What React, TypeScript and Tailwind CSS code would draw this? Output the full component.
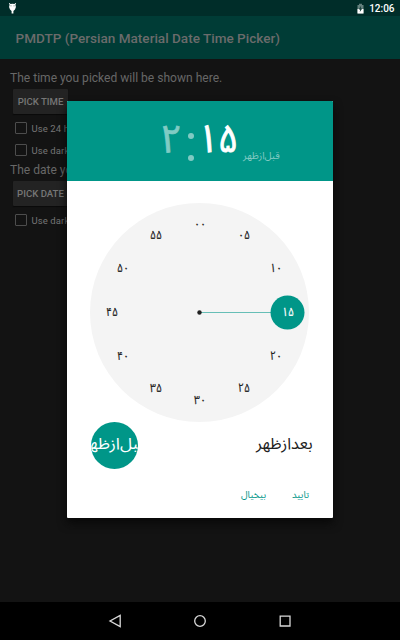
import React from 'react';

const minutes = ['۰۰', '۰۵', '۱۰', '۱۵', '۲۰', '۲۵', '۳۰', '۳۵', '۴۰', '۴۵', '۵۰', '۵۵'];

function CheckRow({ label }: { label: string }) {
  return (
    <div className="flex h-[22px] items-center gap-[4.5px] pl-[15px] text-[9.5px] tracking-[0.1px] text-[#767676]">
      <span className="size-3 rounded-[1px] border-[1.5px] border-[#4d4d4d]" />
      <span className="pt-[2px]">{label}</span>
    </div>
  );
}

function PickButton({ label }: { label: string }) {
  return (
    <button className="ml-[13px] flex h-[25px] w-[55px] items-center justify-center rounded-[1px] bg-[#232323] pt-[1px] text-[9.6px] font-medium whitespace-nowrap text-[#767676] shadow-[0_1px_1px_#0a0a0a]">
      {label}
    </button>
  );
}

function ClockFace() {
  return (
    <div className="relative ml-[23px] mt-[22px] size-[219px] rounded-full bg-[#f4f4f4]">
      <svg className="absolute inset-0" width="219" height="219" viewBox="0 0 219 219">
        <path d="M109.5 109.5H181" stroke="#66beb6" strokeWidth="1.2" />
        <circle cx="109.5" cy="109.5" r="2.2" fill="#212121" />
        <circle cx="197.5" cy="109.5" r="17" fill="#009688" />
      </svg>
      {minutes.map((value, i) => {
        const angle = (i * Math.PI) / 6;
        return (
          <span
            key={value}
            className={`absolute flex h-4 w-6 -translate-x-1/2 -translate-y-1/2 scale-x-[0.87] items-center justify-center font-['Noto_Sans_Arabic','DejaVu_Sans'] text-[12px] leading-4 [-webkit-text-stroke:0.2px] ${i === 3 ? 'text-white' : 'text-[#212121]'}`}
            style={{ left: 109.5 + 88 * Math.sin(angle), top: 109.5 - 88 * Math.cos(angle) }}
          >
            {value}
          </span>
        );
      })}
    </div>
  );
}

export default function App() {
  return (
    <div className="relative flex h-[640px] w-[400px] flex-col overflow-hidden bg-[#131313] font-['Roboto',sans-serif]">
      <div className="flex h-4 shrink-0 items-center bg-[#002d29] pr-[5.5px] pl-[8px] text-white">
        <svg width="9" height="12" viewBox="0 0 9 12" fill="white">
          <path d="M.9 1.2 1.6 1 2.5 2Q4.5 1.3 6.5 2L7.4 1l.7.2-.7 1.6Q8.8 5.6 7 7.6L5.4 8.9V11.5H3.6V8.9L2 7.6Q.2 5.6 1.6 2.8z" />
          <path d="M2.4 3.4h1.1v.9H2.4zM5.5 3.4h1.1v.9H5.5z" fill="#4d6c69" />
        </svg>
        <svg className="ml-auto mr-[5px]" width="7" height="11" viewBox="0 0 7 11">
          <path d="M2 .7h3V2h1.5v8.5h-6V2H2z" fill="#64817e" />
          <path d="M.5 6h6v4.5h-6z" fill="white" />
          <path d="M4.1 2.8 1.7 6.4h1.4L2.8 9l2.5-3.5H3.8z" fill="#163d39" />
        </svg>
        <span className="pt-[2px] text-[10px] font-medium leading-none">12:06</span>
      </div>
      <header className="flex h-[43px] shrink-0 items-center bg-[#003c36] pl-[15.5px] text-[13.55px] font-medium text-[#6b6b6b]">
        <h1 className="mt-[1px] whitespace-nowrap">PMDTP (Persian Material Date Time Picker)</h1>
      </header>
      <main className="h-[543px]">
        <p className="h-[30px] pl-[10px] pt-[10px] text-[12.05px] leading-[18px] text-[#676767]">The time you picked will be shown here.</p>
        <PickButton label="PICK TIME" />
        <div className="pt-[3px]">
          <CheckRow label="Use 24 hours mode" />
          <CheckRow label="Use dark theme" />
        </div>
        <p className="h-5 pl-[10px] text-[12.05px] leading-[18px] text-[#676767]">The date you picked will be shown here.</p>
        <PickButton label="PICK DATE" />
        <div className="pt-[3px]"><CheckRow label="Use dark theme" /></div>
      </main>
      <nav className="flex h-[38px] shrink-0 items-center justify-center gap-[71px] bg-black">
        <svg width="14" height="14" viewBox="0 0 14 14" fill="none" stroke="#d9d9d9" strokeWidth="1.3"><path d="M12.2 1.4v11.2L2 7z" /></svg>
        <svg width="14" height="14" viewBox="0 0 14 14" fill="none" stroke="#d9d9d9" strokeWidth="1.3"><circle cx="7" cy="7" r="5.3" /></svg>
        <svg width="14" height="14" viewBox="0 0 14 14" fill="none" stroke="#d9d9d9" strokeWidth="1.3"><path d="M2.2 2.2h9.8V12H2.2z" /></svg>
      </nav>

      <section className="absolute left-[67px] top-[101px] h-[417px] w-[266px] overflow-hidden rounded-[1px] bg-white font-['Noto_Sans_Arabic','DejaVu_Sans',sans-serif] shadow-[0_5px_10px_#080808]">
        <div className="flex h-20 bg-[#009688] text-white">
          <span className="ml-[93px] mt-[14px] w-[22px] text-center text-[39px] leading-[50px] opacity-50 [-webkit-text-stroke:0.7px]">۲</span>
          <span className="ml-[1px] flex w-[15px] flex-col items-center gap-4 pt-[32px] opacity-50"><i className="size-[6px] rounded-full bg-white" /><i className="size-[6px] rounded-full bg-white" /></span>
          <span className="mt-[14px] flex w-[40px] scale-x-[0.9] justify-center text-[39px] leading-[50px] [-webkit-text-stroke:1px]">۱۵</span>
          <span className="ml-[5px] mt-[47px] whitespace-nowrap text-[10px] leading-4 text-[#80cac3]" dir="rtl">قبل‌از‌ظهر</span>
        </div>
        <ClockFace />
        <div className="flex h-[46px] items-center justify-between pl-6 pr-5">
          <span className="flex size-[47px] items-center justify-center overflow-hidden rounded-full bg-[#009688] text-[16px] whitespace-nowrap text-white" dir="rtl"><span className="mb-[3px] shrink-0 scale-x-[1.08]">قبل‌از‌ظهر</span></span>
          <span className="mb-[3px] origin-right scale-x-[1.02] text-[16px] whitespace-nowrap text-[#212121]" dir="rtl">بعدازظهر</span>
        </div>
        <div className="flex h-[54px] items-center justify-end gap-[26px] pr-6 text-[9.5px] text-[#009688]">
          <span dir="rtl">بیخیال</span>
          <span dir="rtl">تایید</span>
        </div>
      </section>
    </div>
  );
}
